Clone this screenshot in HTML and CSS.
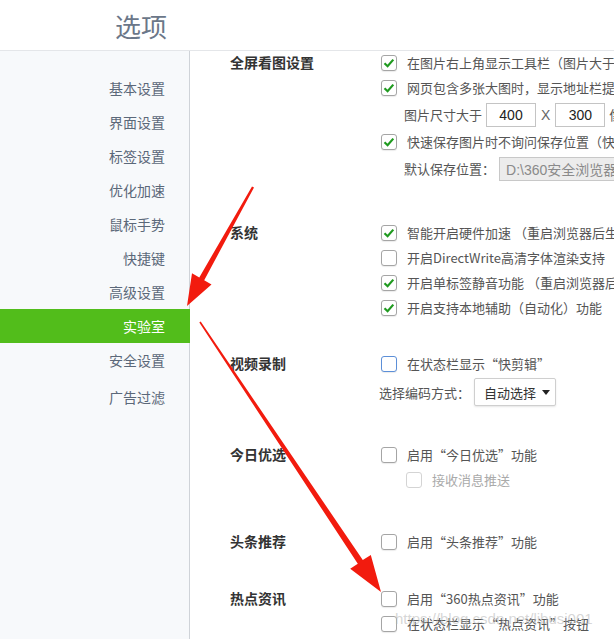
FILE: index.html
```html
<!DOCTYPE html>
<html lang="zh-CN">
<head>
  <meta charset="UTF-8">
  <title>选项</title>
  <link rel="stylesheet" href="styles.css">
</head>
<body>
  <div class="header">
    <h1>选项</h1>
  </div>

  <div class="main">
    <!-- 左侧导航 -->
    <div class="sidebar">
      <div class="nav-item">基本设置</div>
      <div class="nav-item">界面设置</div>
      <div class="nav-item">标签设置</div>
      <div class="nav-item">优化加速</div>
      <div class="nav-item">鼠标手势</div>
      <div class="nav-item">快捷键</div>
      <div class="nav-item">高级设置</div>
      <div class="nav-item active">实验室</div>
      <div class="nav-item">安全设置</div>
      <div class="nav-item last">广告过滤</div>
    </div>

    <!-- 右侧设置项 -->
    <div class="content">
      <div class="section">
        <div class="section-title">全屏看图设置</div>
        <div class="options">
          <div class="row"><span class="cb on"><svg viewBox="0 0 14 14"><path d="M2.5 7.2 L5.6 10.2 L11.3 3.6"/></svg></span>在图片右上角显示工具栏（图片大于200x200像素时）</div>
          <div class="row"><span class="cb on"><svg viewBox="0 0 14 14"><path d="M2.5 7.2 L5.6 10.2 L11.3 3.6"/></svg></span>网页包含多张大图时，显示地址栏提示</div>
          <div class="row field">图片尺寸大于<input class="num" type="text" value="400"><span class="times">X</span><input class="num" type="text" value="300">像素</div>
          <div class="row"><span class="cb on"><svg viewBox="0 0 14 14"><path d="M2.5 7.2 L5.6 10.2 L11.3 3.6"/></svg></span>快速保存图片时不询问保存位置（快捷键）</div>
          <div class="row field">默认保存位置：<input class="path" type="text" value="D:\360安全浏览器下载\图片" disabled></div>
        </div>
      </div>

      <div class="section system">
        <div class="section-title">系统</div>
        <div class="options">
          <div class="row"><span class="cb on"><svg viewBox="0 0 14 14"><path d="M2.5 7.2 L5.6 10.2 L11.3 3.6"/></svg></span>智能开启硬件加速 （重启浏览器后生效）</div>
          <div class="row"><span class="cb"></span>开启DirectWrite高清字体渲染支持</div>
          <div class="row"><span class="cb on"><svg viewBox="0 0 14 14"><path d="M2.5 7.2 L5.6 10.2 L11.3 3.6"/></svg></span>开启单标签静音功能 （重启浏览器后生效）</div>
          <div class="row"><span class="cb on"><svg viewBox="0 0 14 14"><path d="M2.5 7.2 L5.6 10.2 L11.3 3.6"/></svg></span>开启支持本地辅助（自动化）功能</div>
        </div>
      </div>

      <div class="section video">
        <div class="section-title">视频录制</div>
        <div class="options">
          <div class="row"><span class="cb focus"></span>在状态栏显示“快剪辑”</div>
          <div class="row select-row">选择编码方式：<div class="select">自动选择<span class="caret"></span></div></div>
        </div>
      </div>

      <div class="section">
        <div class="section-title">今日优选</div>
        <div class="options">
          <div class="row"><span class="cb"></span>启用“今日优选”功能</div>
          <div class="row sub disabled"><span class="cb"></span>接收消息推送</div>
        </div>
      </div>

      <div class="section toutiao">
        <div class="section-title">头条推荐</div>
        <div class="options">
          <div class="row"><span class="cb"></span>启用“头条推荐”功能</div>
        </div>
      </div>

      <div class="section hot">
        <div class="section-title">热点资讯</div>
        <div class="options">
          <div class="row"><span class="cb"></span>启用“360热点资讯”功能</div>
          <div class="row"><span class="cb"></span>在状态栏显示“热点资讯”按钮</div>
        </div>
      </div>
    </div>
  </div>

  <!-- 标注箭头 -->
  <svg class="marks" width="614" height="639" viewBox="0 0 614 639">
    <polygon points="254,187.5 204.2,280.2 211.5,284.4 187,306 192,273.2 199.3,277.4 252,186.5"/>
    <polygon points="199.3,322.4 357.8,563.8 350.2,568.8 381,592 370.8,555 362.8,560 200.7,321.6"/>
  </svg>

  <div class="watermark">https://blog.csdn.net/libusi001</div>
</body>
</html>
```

FILE: styles.css
```css
/* 基本样式 */
body {
  margin: 0;
  height: 639px;
  position: relative;
  overflow: hidden;
  background: #fff;
  font-family: "Noto Sans CJK SC", "Microsoft YaHei", sans-serif;
  font-size: 13px;
  color: #555;
}

/* 顶部标题栏 */
.header {
  height: 50px;
  display: flex;
  align-items: center;
  padding-left: 115px;
  border-bottom: 1px solid #e4e6e9;
}
.header h1 {
  margin: 0;
  font-size: 26px;
  font-weight: normal;
  color: #6b7789;
}

.main {
  display: flex;
  height: 588px;
}

/* 左侧导航 */
.sidebar {
  width: 189px;
  flex: none;
  padding-top: 20px;
  background: #f7f9fb;
  border-right: 1px solid #cfd3d8;
}
.nav-item {
  height: 34px;
  line-height: 34px;
  padding-right: 24px;
  text-align: right;
  font-size: 14px;
  color: #5b6879;
}
.nav-item.active {
  margin-right: -1px;
  padding-right: 25px;
  background: #52bd1b;
  color: #fff;
}
.nav-item.last {
  margin-top: 3px;
}

/* 右侧内容 */
.content {
  flex: 1;
  overflow: hidden;
  margin-top: -1px;
  padding-left: 40px;
}
.section {
  display: flex;
}
.section + .section {
  margin-top: 34px;
}
.section.system {
  margin-top: 37px;
}
.section.video {
  margin-top: 31px;
}
.section.toutiao {
  margin-top: 37px;
}
.section.hot {
  margin-top: 32px;
}
.section-title {
  width: 151px;
  flex: none;
  line-height: 25px;
  font-size: 14px;
  font-weight: bold;
  color: #333;
}
.options {
  white-space: nowrap;
}
.row {
  height: 25px;
  display: flex;
  align-items: center;
}
.row.field {
  height: 29px;
  padding-left: 23px;
}
.row.select-row {
  height: 32px;
  margin-left: -2px;
}
.row.sub {
  padding-left: 25px;
}

/* 复选框 */
.cb {
  width: 14px;
  height: 14px;
  flex: none;
  margin-right: 10px;
  border: 1px solid #a5a5a5;
  border-radius: 3px;
  background: #fff;
  box-shadow: 0 1px 1px rgba(0, 0, 0, 0.08);
}
.cb svg {
  display: block;
  width: 14px;
  height: 14px;
}
.cb svg path {
  fill: none;
  stroke: #1f9a1f;
  stroke-width: 2.2;
}
.cb.focus {
  border-color: #5c8fd8;
}
.disabled {
  color: #aaa;
}
.disabled .cb {
  border-color: #d4d4d4;
  box-shadow: none;
}

/* 输入框 */
.num {
  width: 50px;
  height: 24px;
  box-sizing: border-box;
  margin: 0 4px;
  padding: 0;
  border: 1px solid #c4c4c4;
  text-align: center;
  font-family: "Liberation Sans", Arial, sans-serif;
  font-size: 14px;
  color: #222;
}
.times {
  font-family: "Liberation Sans", Arial, sans-serif;
  font-size: 14px;
  color: #666;
  margin: 0 1px;
}
.path {
  width: 220px;
  height: 24px;
  box-sizing: border-box;
  margin-left: 4px;
  padding: 0 6px;
  border: 1px solid #c8c8c8;
  background: #ececec;
  font-family: "Liberation Sans", "Noto Sans CJK SC", sans-serif;
  font-size: 14px;
  color: #8a8a8a;
}

/* 下拉选择 */
.select {
  width: 82px;
  height: 28px;
  box-sizing: border-box;
  margin-left: 4px;
  padding-left: 9px;
  display: flex;
  align-items: center;
  border: 1px solid #cfcfcf;
  border-radius: 2px;
  background: #fff;
  box-shadow: 0 1px 2px rgba(0, 0, 0, 0.1);
  color: #333;
}
.caret {
  margin-left: 6px;
  border-left: 4px solid transparent;
  border-right: 4px solid transparent;
  border-top: 5px solid #222;
}

/* 标注 */
.marks {
  position: absolute;
  top: 0;
  left: 0;
  pointer-events: none;
}
.marks polygon {
  fill: #f21b0e;
}
.watermark {
  position: absolute;
  left: 395px;
  top: 610px;
  font-family: "Liberation Sans", Arial, sans-serif;
  font-size: 15px;
  color: rgba(180, 180, 180, 0.55);
  pointer-events: none;
}
```
